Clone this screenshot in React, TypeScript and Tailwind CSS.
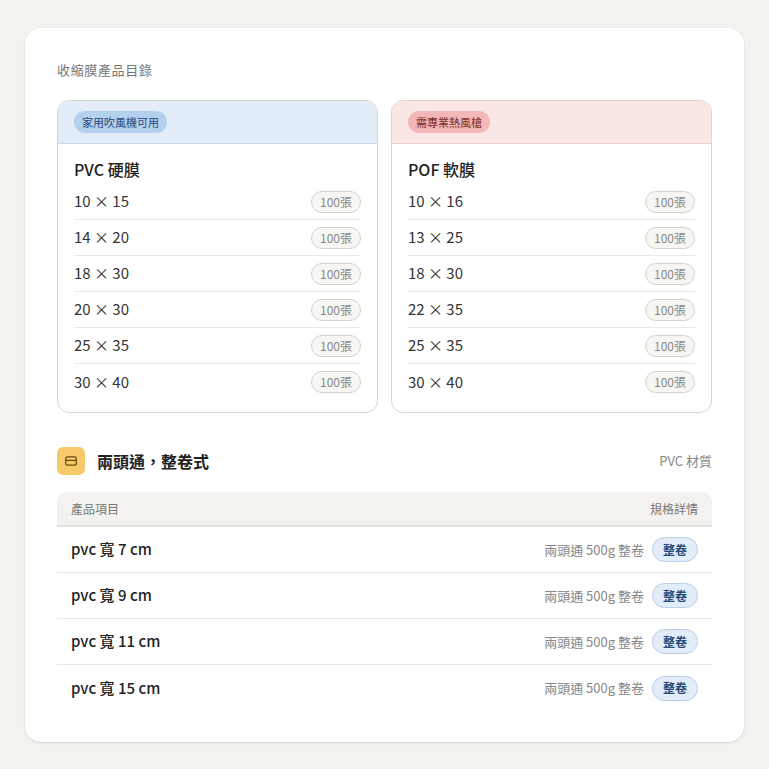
const F = { fontFamily: '"Noto Sans CJK TC","Noto Sans",sans-serif' };

const pvc = ["10 × 15", "14 × 20", "18 × 30", "20 × 30", "25 × 35", "30 × 40"];
const pof = ["10 × 16", "13 × 25", "18 × 30", "22 × 35", "25 × 35", "30 × 40"];

function Card({ tag, title, items, blue }: { tag: string; title: string; items: string[]; blue: boolean }) {
  return (
    <div className="flex-1 rounded-[12px] border border-[#d9d7d2] overflow-hidden bg-white">
      <div className={`h-[43px] flex items-center px-4 border-b ${blue ? "bg-[#e3edf9] border-[#c9d9ee]" : "bg-[#fbe6e6] border-[#f0cccc]"}`}>
        <span className={`rounded-full px-2 h-[22px] flex items-center text-[11px] ${blue ? "bg-[#b5cfee] text-[#244a78]" : "bg-[#f2b7b7] text-[#7a2a2a]"}`}>{tag}</span>
      </div>
      <div className="px-4 pt-[10px] pb-[12px]">
        <div className="text-[16px] font-medium text-[#222] h-[30px] flex items-center">{title}</div>
        {items.map((s, i) => (
          <div key={i} className={`h-[36px] flex items-center justify-between ${i < items.length - 1 ? "border-b border-[#ebe9e5]" : ""}`}>
            <span className="text-[15px] text-[#333]">{s}</span>
            <span className="rounded-full border border-[#d6d3cd] bg-[#f7f6f3] px-2 h-[22px] flex items-center text-[12px] text-[#888]">100張</span>
          </div>
        ))}
      </div>
    </div>
  );
}

export default function App() {
  const rows = ["pvc 寬 7 cm", "pvc 寬 9 cm", "pvc 寬 11 cm", "pvc 寬 15 cm"];
  return (
    <div style={F} className="w-[769px] h-[769px] bg-[#f3f2ef] pt-[28px] px-[25px]">
      <div className="bg-white rounded-[16px] h-[714px] px-[32px] pt-[32px] shadow-sm">
        <div className="text-[13px] text-[#777] tracking-wider h-[20px] flex items-center">收縮膜產品目錄</div>
        <div className="flex gap-[13px] mt-[20px]">
          <Card tag="家用吹風機可用" title="PVC 硬膜" items={pvc} blue />
          <Card tag="需專業熱風槍" title="POF 軟膜" items={pof} blue={false} />
        </div>
        <div className="flex items-center justify-between mt-[33px] h-[30px]">
          <div className="flex items-center gap-3">
            <div className="w-[28px] h-[28px] rounded-[6px] bg-[#f7c96b] flex items-center justify-center">
              <svg width="14" height="14" viewBox="0 0 24 24" fill="none" stroke="#6b4a10" strokeWidth="2.2"><rect x="3" y="5" width="18" height="14" rx="2.5" /><line x1="3" y1="11" x2="21" y2="11" /></svg>
            </div>
            <span className="text-[16px] font-bold text-[#222]">兩頭通，整卷式</span>
          </div>
          <span className="text-[13px] text-[#888]">PVC 材質</span>
        </div>
        <div className="mt-[16px]">
          <div className="h-[35px] bg-[#f3f2ef] rounded-t-[10px] border-b-2 border-[#e2e0dc] flex items-center justify-between px-[14px] text-[12px] text-[#777]">
            <span>產品項目</span><span>規格詳情</span>
          </div>
          {rows.map((r, i) => (
            <div key={i} className={`h-[46px] flex items-center justify-between px-[14px] ${i < rows.length - 1 ? "border-b border-[#ebe9e5]" : ""}`}>
              <span className="text-[15px] font-medium text-[#222]">{r}</span>
              <div className="flex items-center gap-2">
                <span className="text-[13px] text-[#888]">兩頭通 500g 整卷</span>
                <span className="rounded-full bg-[#e3edf9] border border-[#b9cfea] px-[10px] h-[25px] flex items-center text-[12px] font-bold text-[#244a78]">整卷</span>
              </div>
            </div>
          ))}
        </div>
      </div>
    </div>
  );
}
